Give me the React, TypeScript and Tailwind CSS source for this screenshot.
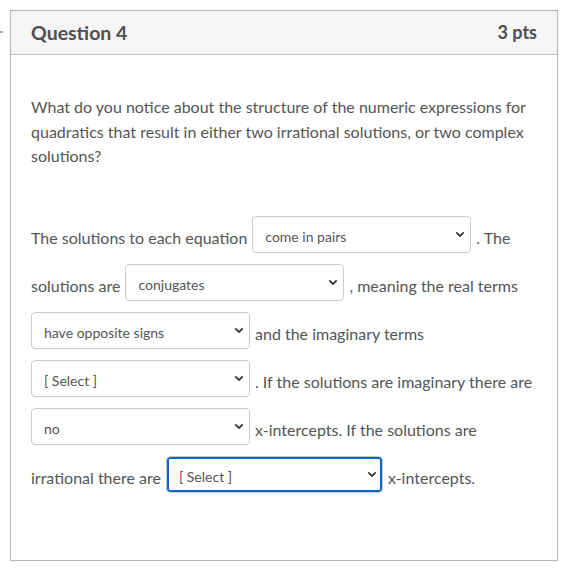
import React from 'react'

function Chevron() {
    return (
        <svg width="10" height="7" viewBox="0 0 10 7" className="shrink-0">
            <path d="M1.3 1.4 L5 5 L8.7 1.4" fill="none" stroke="#3a3a3a" strokeWidth="1.9" />
        </svg>
    )
}

function Dropdown({ value, width = 'w-[219px]', focused = false }: { value: string; width?: string; focused?: boolean }) {
    return (
        <div
            className={`${width} h-[37px] mb-[6px] shrink-0 flex items-center justify-between pl-[12px] pr-[5px] rounded-[4px] border border-[#c7cdd1] bg-white text-[14px] text-[#555555] ${focused ? 'shadow-[inset_0_0_0_2px_#0e64c8]' : ''}`}
        >
            <span className="pt-[3px]">{value}</span>
            <Chevron />
        </div>
    )
}

export default function App() {
    return (
        <div className="relative w-[575px] h-[568px] bg-white pt-[10px] pl-[10px] font-['Lato','Noto_Sans',sans-serif] text-[#555555]">
            <div className="absolute left-0 top-[31px] w-[3px] h-[2px] bg-[#9db3cc]" />

            <div className="w-[548px] h-[551px] border border-[#b5b5b5] flex flex-col">
                <div className="h-[44px] shrink-0 bg-[#f5f5f5] border-b border-[#c4c4c4] flex items-center justify-between px-[20px]">
                    <h2 className="text-[19.5px] font-bold text-[#4f4f4f]">Question 4</h2>
                    <span className="text-[18px] font-bold text-[#4f4f4f]">3 pts</span>
                </div>

                <div className="px-[20px] pt-[40px]">
                    <p className="text-[16px] leading-[24.5px]">
                        What do you notice about the structure of the numeric expressions for quadratics that result in either two irrational solutions, or two complex solutions?
                    </p>

                    <div className="mt-[45px] text-[16px] flex flex-col">
                        <div className="h-[48px] flex items-center gap-[5px]">
                            <span>The solutions to each equation</span>
                            <Dropdown value="come in pairs" />
                            <span>. The</span>
                        </div>
                        <div className="h-[48px] flex items-center gap-[5px]">
                            <span>solutions are</span>
                            <Dropdown value="conjugates" />
                            <span>, meaning the real terms</span>
                        </div>
                        <div className="h-[48px] flex items-center gap-[5px]">
                            <Dropdown value="have opposite signs" />
                            <span>and the imaginary terms</span>
                        </div>
                        <div className="h-[48px] flex items-center gap-[5px]">
                            <Dropdown value="[ Select ]" />
                            <span>. If the solutions are imaginary there are</span>
                        </div>
                        <div className="h-[48px] flex items-center gap-[5px]">
                            <Dropdown value="no" />
                            <span>x-intercepts. If the solutions are</span>
                        </div>
                        <div className="h-[48px] flex items-center gap-[5px]">
                            <span>irrational there are</span>
                            <Dropdown value="[ Select ]" width="w-[217px]" focused />
                            <span>x-intercepts.</span>
                        </div>
                    </div>
                </div>
            </div>
        </div>
    )
}
